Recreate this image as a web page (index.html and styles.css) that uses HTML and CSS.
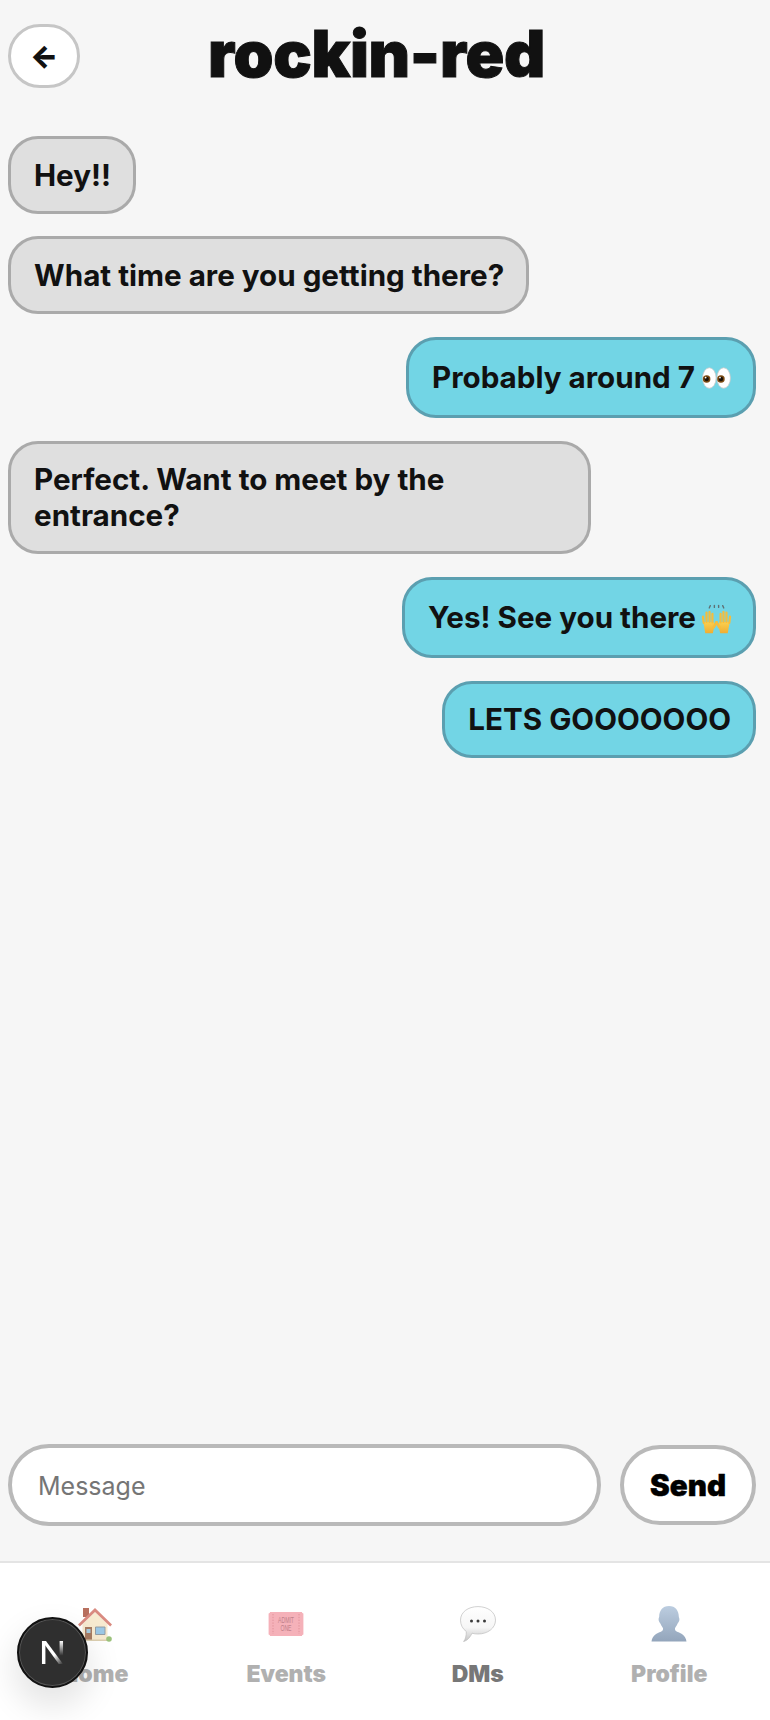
FILE: index.html
```html
<!DOCTYPE html>
<html lang="en">
<head>
<meta charset="utf-8">
<title>rockin-red</title>
<link rel="stylesheet" href="styles.css">
</head>
<body>
<svg class="defs" width="0" height="0" aria-hidden="true">
  <defs>
    <linearGradient id="bubbleFill" x1="0" y1="0" x2="0" y2="1"><stop offset="0" stop-color="#ffffff"/><stop offset=".6" stop-color="#f6f6f6"/><stop offset="1" stop-color="#c4c4c4"/></linearGradient>
    <linearGradient id="personFill" x1="0" y1="0" x2="0" y2="1"><stop offset="0" stop-color="#bccde0"/><stop offset="1" stop-color="#93a5bb"/></linearGradient>
    <linearGradient id="handFill" x1="0" y1="0" x2="0" y2="1"><stop offset="0" stop-color="#fbd04f"/><stop offset="1" stop-color="#f0ad32"/></linearGradient>
    <linearGradient id="nFade" x1="0" y1="0" x2="1" y2="1"><stop offset=".6" stop-color="#fff"/><stop offset="1" stop-color="#fff" stop-opacity="0"/></linearGradient>
    <linearGradient id="nFade2" x1="0" y1="0" x2="0" y2="1"><stop offset="0" stop-color="#fff"/><stop offset=".85" stop-color="#fff" stop-opacity="0"/></linearGradient>
  </defs>
</svg>
<div class="app">
  <header class="topbar">
    <button class="back" type="button">←</button>
    <h1 class="title">rockin-red</h1>
  </header>
  <main class="messages">
    <div class="bubble them">Hey!!</div>
    <div class="bubble them">What time are you getting there?</div>
    <div class="bubble me tall">Probably around 7
      <svg class="emoji eyes" viewBox="0 0 30 22" role="img" aria-label="eyes">
        <ellipse cx="7.6" cy="11" rx="7" ry="10.6" fill="#fff" stroke="#c9c9c9" stroke-width=".8"/>
        <ellipse cx="22.4" cy="11" rx="7" ry="10.6" fill="#fff" stroke="#c9c9c9" stroke-width=".8"/>
        <circle cx="4.8" cy="12" r="3.9" fill="#7a4a12"/><circle cx="4.8" cy="12" r="2.3" fill="#1b1108"/><circle cx="3.8" cy="10.6" r=".9" fill="#fff"/>
        <circle cx="19.6" cy="12" r="3.9" fill="#7a4a12"/><circle cx="19.6" cy="12" r="2.3" fill="#1b1108"/><circle cx="18.6" cy="10.6" r=".9" fill="#fff"/>
      </svg>
    </div>
    <div class="bubble them">Perfect. Want to meet by the entrance?</div>
    <div class="bubble me tall">Yes! See you there
      <svg class="emoji hands" viewBox="0 0 32 30" role="img" aria-label="raising hands">
        <g stroke="#5f7073" stroke-width="1.4" stroke-linecap="round"><path d="M8.500 3.600 9.600 1.200"/><path d="M13.800 3V1"/><path d="M18.200 3V1"/><path d="M23.500 3.600 22.400 1.200"/></g>
        <g fill="url(#handFill)" stroke="#f5bd3e" stroke-linecap="round">
          <path d="M2.400 18h10.800l.7 4-1.700 7.800H4.400z" stroke="none"/>
          <path d="M2.800 19 2 12.500M5.700 18V8.400M8.800 18V7.600M11.800 18.500V9.600" fill="none" stroke-width="2.300"/>
          <path d="M13 23.500l3-5" fill="none" stroke-width="2.800"/>
        </g>
        <g fill="url(#handFill)" stroke="#f5bd3e" stroke-linecap="round">
          <path d="M29.600 18H18.800l-.7 4 1.700 7.800h7.800z" stroke="none"/>
          <path d="M29.200 19l.8-6.500M26.300 18V8.400M23.200 18V7.600M20.200 18.500V9.600" fill="none" stroke-width="2.300"/>
          <path d="M19 23.500l-3-5" fill="none" stroke-width="2.800"/>
        </g>
      </svg>
    </div>
    <div class="bubble me">LETS GOOOOOOO</div>
  </main>
  <form class="composer">
    <input class="field" type="text" placeholder="Message">
    <button class="send" type="button">Send</button>
  </form>
  <nav class="tabs">
    <a class="tab">
      <svg class="tab-icon" viewBox="0 0 36 36" aria-hidden="true">
        <path d="M6 2h6v9H6z" fill="#b8705f"/>
        <path d="M5.500 18 18 6l12.500 12v16h-25z" fill="#f7ead0"/>
        <path d="M1 18.500 18 2l17 16.500-1.800 2L18 6 2.800 20.500z" fill="#d98a80"/>
        <path d="M8 21h7v13H8z" fill="#a77b62"/><path d="M9.500 23h4v4h-4z" fill="#a8cde0"/>
        <path d="M18.500 21H28v7.500h-9.500z" fill="#9cc8e6" stroke="#8f979e" stroke-width=".9"/>
        <path d="M5.500 33.500h25V35h-25z" fill="#dccfb0"/>
        <circle cx="32" cy="33" r="2.800" fill="#9cc27c"/>
      </svg>
      <span class="tab-label">Home</span>
    </a>
    <a class="tab">
      <svg class="tab-icon" viewBox="0 0 36 36" aria-hidden="true">
        <path d="M2 6h32c0 1 .6 1.400 1.400 1.500v21c-.8.100-1.400.5-1.400 1.500H2c0-1-.6-1.400-1.400-1.500v-21C1.400 7.400 2 7 2 6z" fill="#f5b1b9"/>
        <path d="M5 8v20M31 8v20" stroke="#e0929b" stroke-width="1" stroke-dasharray="1.400 1.400"/>
        <text class="ticket-text" x="18" y="16.800" text-anchor="middle" textLength="16" lengthAdjust="spacingAndGlyphs">ADMIT</text>
        <text class="ticket-text" x="18" y="24.800" text-anchor="middle" textLength="11" lengthAdjust="spacingAndGlyphs">ONE</text>
      </svg>
      <span class="tab-label">Events</span>
    </a>
    <a class="tab active">
      <svg class="tab-icon" viewBox="0 0 36 36" aria-hidden="true">
        <path d="M18 .6c10 0 17.500 5.600 17.500 13.500S28 28 18 28c-2.200 0-4.200-.2-6-.8-1.600 3.500-4.200 7.200-8.400 8.400 2-2.600 2.800-6 2.700-10.100C2.800 23 .5 19 .5 14.100.5 6.200 8 .6 18 .6z" fill="url(#bubbleFill)" stroke="#bdbdbd" stroke-width=".7"/>
        <circle cx="11.500" cy="15" r="1.500" fill="#3a3a3a"/><circle cx="18" cy="15" r="1.500" fill="#3a3a3a"/><circle cx="24.500" cy="15" r="1.500" fill="#3a3a3a"/>
      </svg>
      <span class="tab-label">DMs</span>
    </a>
    <a class="tab">
      <svg class="tab-icon" viewBox="0 0 36 36" aria-hidden="true">
        <path d="M18 0c6.400 0 9.800 4.800 9.800 10.600 0 1 .6 1.400.6 2.800 0 1.800-1 3-1.900 4.300-.9 2-1.900 3.300-2.500 4.500-.2 1.600.2 2.700 2.100 3.500 3.800 1.500 8.500 3 9.400 9.900H.5c.9-6.900 5.600-8.400 9.400-9.900 1.900-.8 2.300-1.900 2.100-3.500-.6-1.200-1.600-2.500-2.500-4.500-.9-1.300-1.900-2.500-1.900-4.300 0-1.400.6-1.800.6-2.800C8.200 4.800 11.600 0 18 0z" fill="url(#personFill)"/>
      </svg>
      <span class="tab-label">Profile</span>
    </a>
  </nav>
</div>
<div class="next-badge" aria-label="Next.js">
  <svg class="next-n" viewBox="0 0 24 26" aria-hidden="true">
    <path d="M1 1h3.600v24H1z" fill="#fff"/>
    <path d="M1 1h4.200L23 25h-4.400z" fill="url(#nFade)"/>
    <path d="M19.400 1H23v18h-3.600z" fill="url(#nFade2)"/>
  </svg>
</div>
</body>
</html>
```

FILE: styles.css
```css
* {
  box-sizing: border-box;
}

html,
body {
  margin: 0;
  height: 100%;
}

body {
  background: #f6f6f6;
  color: #111;
  font-family: Inter, "Liberation Sans", sans-serif;
}

.defs {
  position: absolute;
}

.app {
  display: flex;
  flex-direction: column;
  height: 1720px;
}

.topbar {
  display: flex;
  align-items: flex-start;
  height: 112px;
  padding: 24px 14px 0 8px;
}

.back {
  width: 72px;
  height: 64px;
  padding: 0;
  border: 3px solid #c6c6c6;
  border-radius: 32px;
  background: #fff;
  color: #111;
  font-family: Inter, sans-serif;
  font-size: 30px;
  font-weight: 900;
  line-height: 1;
}

.title {
  margin: -9px 0 0 128px;
  font-size: 64px;
  font-weight: 900;
  line-height: 78px;
  letter-spacing: -0.3px;
  -webkit-text-stroke: 1px #111;
}

.messages {
  flex: 1;
  display: flex;
  flex-direction: column;
  align-items: flex-start;
  gap: 22.800px;
  padding: 24px 14px 0 8px;
}

.bubble {
  max-width: 583px;
  padding: 18.500px 22px 17.500px 23px;
  border: 3px solid #aaa;
  border-radius: 30px;
  background: #dfdfdf;
  font-size: 29.600px;
  font-weight: 700;
  line-height: 1.2;
}

.bubble.me {
  align-self: flex-end;
  border-color: #5b9fb0;
  background: #72d5e5;
}

.bubble.tall {
  padding-top: 20px;
  padding-bottom: 20px;
}

.emoji {
  display: inline-block;
}

.eyes {
  width: 29px;
  height: 22px;
  margin-bottom: -1px;
}

.hands {
  width: 31px;
  height: 30px;
  margin: -4px -1px -6px -2px;
}

.composer {
  display: flex;
  align-items: center;
  gap: 19px;
  padding: 0 14px 35px 8px;
}

.field {
  flex: 1;
  min-width: 0;
  height: 82px;
  padding: 1px 26px 0;
  border: 4px solid #b9b9b9;
  border-radius: 41px;
  background: #fff;
  color: #111;
  font-family: Inter, sans-serif;
  font-size: 25px;
  outline: none;
}

.field::placeholder {
  color: #757575;
  opacity: 1;
}

.send {
  width: 136px;
  height: 80px;
  padding: 0;
  border: 4px solid #b9b9b9;
  border-radius: 40px;
  background: #fff;
  color: #000;
  font-family: Inter, sans-serif;
  font-size: 29.600px;
  font-weight: 900;
  -webkit-text-stroke: 0.4px #000;
}

.tabs {
  display: grid;
  grid-template-columns: repeat(4, 191.500px);
  height: 159px;
  padding: 43px 0 0 0;
  border-top: 2px solid #e4e4e4;
  background: #fff;
}

.tab {
  display: flex;
  flex-direction: column;
  align-items: center;
  gap: 19px;
  margin-right: 2px;
}

.tab-icon {
  display: block;
  width: 36px;
  height: 36px;
}

.tab-label {
  color: #b0b0b0;
  font-size: 23px;
  font-weight: 900;
  line-height: 27px;
}

.active .tab-label {
  color: #777;
}

.ticket-text {
  fill: #c0808a;
  font-family: "Liberation Sans", sans-serif;
  font-size: 8.500px;
}

.next-badge {
  position: absolute;
  left: 17px;
  top: 1617px;
  display: flex;
  align-items: center;
  justify-content: center;
  width: 71px;
  height: 71px;
  border: 2px solid #111;
  border-radius: 50%;
  background: #2f2f2f;
  box-shadow: inset 0 0 0 1px #555, 0 16px 32px 4px rgba(0, 0, 0, 0.1);
}

.next-n {
  width: 23px;
  height: 25px;
}
```
